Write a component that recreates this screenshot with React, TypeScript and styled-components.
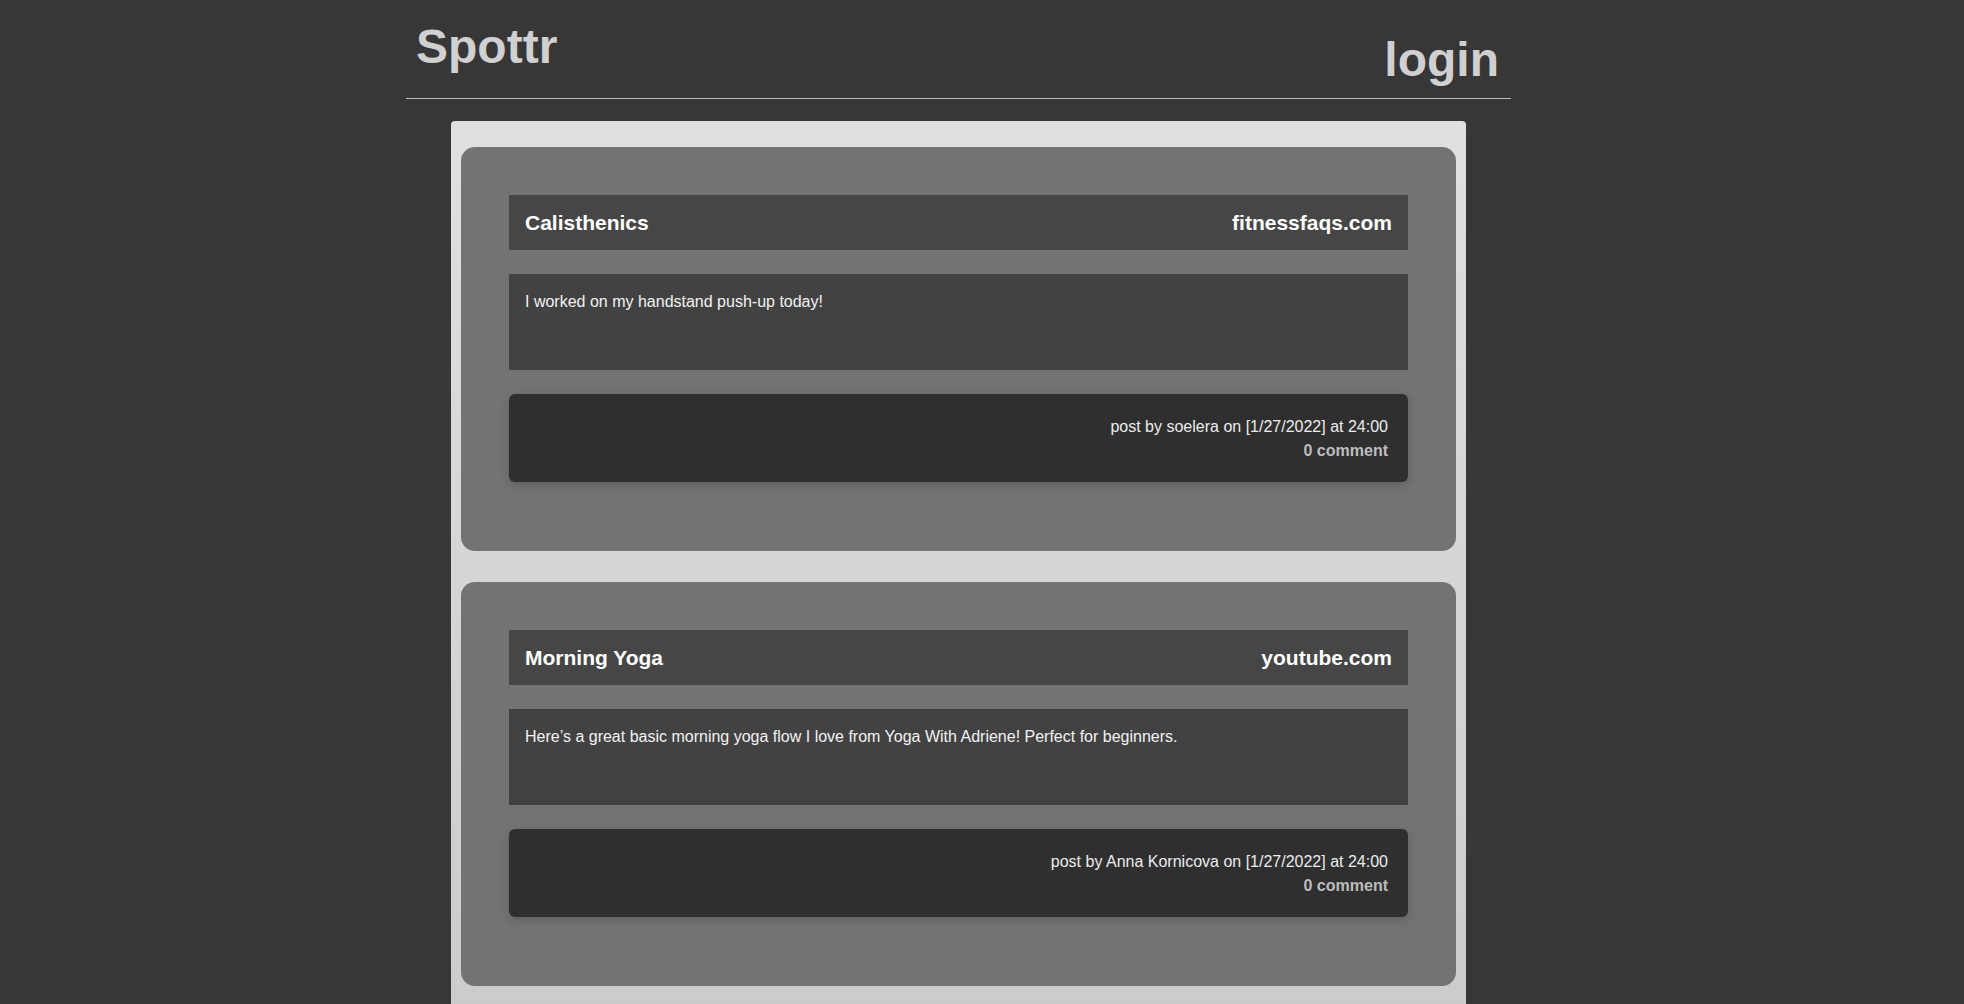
import { createGlobalStyle } from "styled-components";
import styled from "styled-components";

const GlobalStyle = createGlobalStyle`
  html, body {
    margin: 0;
    padding: 0;
    background: #373737;
    font-family: "Liberation Sans", Helvetica, Arial, sans-serif;
  }
`;

const Page = styled.div`
  width: 1105px;
  margin-left: 406px;
`;

const Header = styled.header`
  display: flex;
  justify-content: space-between;
  align-items: flex-start;
  padding: 20px 12px 11px 10px;
  border-bottom: 1px solid #bcbcbc;
`;

const Brand = styled.h1`
  margin: 0;
  font-size: 48px;
  line-height: 54px;
  font-weight: 700;
  color: #d0d0d0;
`;

const Login = styled.a`
  margin-top: 13px;
  font-size: 48px;
  line-height: 54px;
  font-weight: 700;
  color: #d0d0d0;
  text-decoration: none;
  cursor: pointer;
`;

const Feed = styled.main`
  width: 1015px;
  margin: 22px 0 0 45px;
  box-sizing: border-box;
  padding: 26px 10px 32px;
  display: flex;
  flex-direction: column;
  gap: 31px;
  border-radius: 4px 4px 0 0;
  background: linear-gradient(#e0e0e0, #cbcbcb);
`;

const Card = styled.article`
  display: flex;
  flex-direction: column;
  gap: 24px;
  padding: 48px 48px 69px;
  border-radius: 14px;
  background: #737373;
`;

const TitleBar = styled.div`
  height: 55px;
  display: flex;
  align-items: center;
  justify-content: space-between;
  padding: 0 16px;
  background: #464646;
  color: #ffffff;
  font-size: 21px;
  font-weight: 700;
`;

const Body = styled.p`
  margin: 0;
  height: 96px;
  box-sizing: border-box;
  padding: 19px 16px;
  background: #424242;
  color: #f2f2f2;
  font-size: 16px;
`;

const Meta = styled.footer`
  height: 88px;
  box-sizing: border-box;
  padding: 21px 20px 19px;
  display: flex;
  flex-direction: column;
  align-items: flex-end;
  border-radius: 6px;
  background: #2f2f2f;
  box-shadow: 0 3px 10px rgba(0, 0, 0, 0.18);
  font-size: 16px;
  line-height: 24px;
`;

const Byline = styled.span`
  color: #ececec;
`;

const Comments = styled.span`
  color: #bdbdbd;
  font-weight: 700;
`;

type Post = {
  title: string;
  site: string;
  text: string;
  author: string;
  date: string;
  time: string;
  comments: number;
};

const posts: Post[] = [
  {
    title: "Calisthenics",
    site: "fitnessfaqs.com",
    text: "I worked on my handstand push-up today!",
    author: "soelera",
    date: "1/27/2022",
    time: "24:00",
    comments: 0,
  },
  {
    title: "Morning Yoga",
    site: "youtube.com",
    text: "Here\u2019s a great basic morning yoga flow I love from Yoga With Adriene! Perfect for beginners.",
    author: "Anna Kornicova",
    date: "1/27/2022",
    time: "24:00",
    comments: 0,
  },
];

function PostCard({ post }: { post: Post }) {
  return (
    <Card>
      <TitleBar>
        <span>{post.title}</span>
        <span>{post.site}</span>
      </TitleBar>
      <Body>{post.text}</Body>
      <Meta>
        <Byline>
          post by {post.author} on [{post.date}] at {post.time}
        </Byline>
        <Comments>{post.comments} comment</Comments>
      </Meta>
    </Card>
  );
}

export default function App() {
  return (
    <>
      <GlobalStyle />
      <Page>
        <Header>
          <Brand>Spottr</Brand>
          <Login>login</Login>
        </Header>
        <Feed>
          {posts.map((p) => (
            <PostCard key={p.title} post={p} />
          ))}
        </Feed>
      </Page>
    </>
  );
}
